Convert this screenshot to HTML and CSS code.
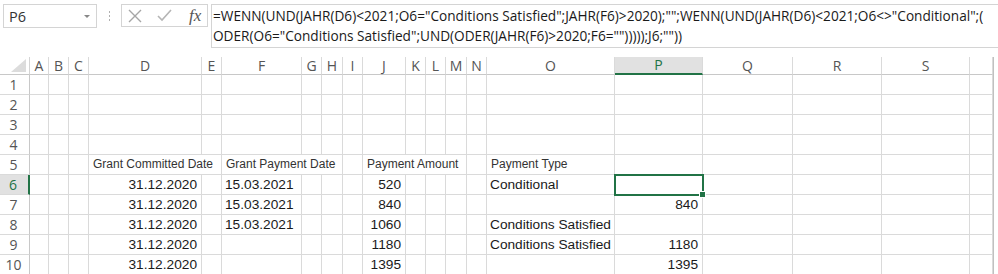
FILE: index.html
```html
<!DOCTYPE html>
<html lang="de">
<head>
  <meta charset="UTF-8" />
  <title>Mappe1 - Excel</title>
  <link rel="stylesheet" href="styles.css">
</head>
<body>
  <!-- Formula bar -->
  <div class="formula-bar">
    <div class="name-box">
      <span>P6</span>
      <span class="drop"></span>
    </div>
    <div class="grip"><i></i><i></i><i></i></div>
    <div class="fx-box">
      <svg width="14" height="14" viewBox="0 0 14 14"><path d="M1 1L13 13M13 1L1 13" stroke="#a6a6a6" stroke-width="1.4" fill="none"/></svg>
      <svg width="15" height="13" viewBox="0 0 15 13"><path d="M1 7L5 11L14 1" stroke="#b5b5b5" stroke-width="1.6" fill="none"/></svg>
      <span class="fx">fx</span>
    </div>
    <div class="formula">=WENN(UND(JAHR(D6)&lt;2021;O6="Conditions Satisfied";JAHR(F6)&gt;2020);"";WENN(UND(JAHR(D6)&lt;2021;O6&lt;&gt;"Conditional";(<br>ODER(O6="Conditions Satisfied";UND(ODER(JAHR(F6)&gt;2020;F6="")))));J6;""))</div>
  </div>

  <!-- Sheet -->
  <div class="sheet">
    <div class="corner"></div>
    <div class="ch">A</div><div class="ch">B</div><div class="ch">C</div><div class="ch">D</div><div class="ch">E</div>
    <div class="ch">F</div><div class="ch">G</div><div class="ch">H</div><div class="ch">I</div><div class="ch">J</div>
    <div class="ch">K</div><div class="ch">L</div><div class="ch">M</div><div class="ch">N</div><div class="ch">O</div>
    <div class="ch active">P</div><div class="ch">Q</div><div class="ch">R</div><div class="ch">S</div><div class="ch"></div>

    <div class="rh">1</div>
    <div class="c"></div><div class="c"></div><div class="c"></div><div class="c"></div><div class="c"></div>
    <div class="c"></div><div class="c"></div><div class="c"></div><div class="c"></div><div class="c"></div>
    <div class="c"></div><div class="c"></div><div class="c"></div><div class="c"></div><div class="c"></div>
    <div class="c"></div><div class="c"></div><div class="c"></div><div class="c"></div><div class="c"></div>

    <div class="rh">2</div>
    <div class="c"></div><div class="c"></div><div class="c"></div><div class="c"></div><div class="c"></div>
    <div class="c"></div><div class="c"></div><div class="c"></div><div class="c"></div><div class="c"></div>
    <div class="c"></div><div class="c"></div><div class="c"></div><div class="c"></div><div class="c"></div>
    <div class="c"></div><div class="c"></div><div class="c"></div><div class="c"></div><div class="c"></div>

    <div class="rh">3</div>
    <div class="c"></div><div class="c"></div><div class="c"></div><div class="c"></div><div class="c"></div>
    <div class="c"></div><div class="c"></div><div class="c"></div><div class="c"></div><div class="c"></div>
    <div class="c"></div><div class="c"></div><div class="c"></div><div class="c"></div><div class="c"></div>
    <div class="c"></div><div class="c"></div><div class="c"></div><div class="c"></div><div class="c"></div>

    <div class="rh">4</div>
    <div class="c"></div><div class="c"></div><div class="c"></div><div class="c"></div><div class="c"></div>
    <div class="c"></div><div class="c"></div><div class="c"></div><div class="c"></div><div class="c"></div>
    <div class="c"></div><div class="c"></div><div class="c"></div><div class="c"></div><div class="c"></div>
    <div class="c"></div><div class="c"></div><div class="c"></div><div class="c"></div><div class="c"></div>

    <div class="rh">5</div>
    <div class="c"></div><div class="c"></div><div class="c"></div>
    <div class="c head span2">Grant Committed Date</div>
    <div class="c head span3">Grant Payment Date</div>
    <div class="c"></div>
    <div class="c head span4">Payment Amount</div>
    <div class="c"></div>
    <div class="c head">Payment Type</div>
    <div class="c"></div><div class="c"></div><div class="c"></div><div class="c"></div><div class="c"></div>

    <div class="rh active">6</div>
    <div class="c"></div><div class="c"></div><div class="c"></div>
    <div class="c num">31.12.2020</div><div class="c"></div>
    <div class="c">15.03.2021</div><div class="c"></div><div class="c"></div><div class="c"></div>
    <div class="c num">520</div><div class="c"></div><div class="c"></div><div class="c"></div><div class="c"></div>
    <div class="c">Conditional</div>
    <div class="c num selected"></div><div class="c"></div><div class="c"></div><div class="c"></div><div class="c"></div>

    <div class="rh">7</div>
    <div class="c"></div><div class="c"></div><div class="c"></div>
    <div class="c num">31.12.2020</div><div class="c"></div>
    <div class="c">15.03.2021</div><div class="c"></div><div class="c"></div><div class="c"></div>
    <div class="c num">840</div><div class="c"></div><div class="c"></div><div class="c"></div><div class="c"></div>
    <div class="c"></div>
    <div class="c num">840</div><div class="c"></div><div class="c"></div><div class="c"></div><div class="c"></div>

    <div class="rh">8</div>
    <div class="c"></div><div class="c"></div><div class="c"></div>
    <div class="c num">31.12.2020</div><div class="c"></div>
    <div class="c">15.03.2021</div><div class="c"></div><div class="c"></div><div class="c"></div>
    <div class="c num">1060</div><div class="c"></div><div class="c"></div><div class="c"></div><div class="c"></div>
    <div class="c">Conditions Satisfied</div>
    <div class="c num"></div><div class="c"></div><div class="c"></div><div class="c"></div><div class="c"></div>

    <div class="rh">9</div>
    <div class="c"></div><div class="c"></div><div class="c"></div>
    <div class="c num">31.12.2020</div><div class="c"></div>
    <div class="c"></div><div class="c"></div><div class="c"></div><div class="c"></div>
    <div class="c num">1180</div><div class="c"></div><div class="c"></div><div class="c"></div><div class="c"></div>
    <div class="c">Conditions Satisfied</div>
    <div class="c num">1180</div><div class="c"></div><div class="c"></div><div class="c"></div><div class="c"></div>

    <div class="rh">10</div>
    <div class="c"></div><div class="c"></div><div class="c"></div>
    <div class="c num">31.12.2020</div><div class="c"></div>
    <div class="c"></div><div class="c"></div><div class="c"></div><div class="c"></div>
    <div class="c num">1395</div><div class="c"></div><div class="c"></div><div class="c"></div><div class="c"></div>
    <div class="c"></div>
    <div class="c num">1395</div><div class="c"></div><div class="c"></div><div class="c"></div><div class="c"></div>
  </div>
</body>
</html>
```

FILE: styles.css
```css
/* Base */
html, body {
  margin: 0; padding: 0;
  background: #fff;
  overflow: hidden;
}
body {
  width: 998px; height: 274px;
  font-family: 'Liberation Sans', Arial, sans-serif;
}

/* Formula bar */
.formula-bar {
  display: flex;
  align-items: flex-start;
  height: 57px;
  padding-top: 4px;
  box-sizing: border-box;
}
.name-box {
  margin-left: 3px;
  width: 94px; height: 24px;
  box-sizing: border-box;
  border: 1px solid #d4d4d4;
  display: flex; align-items: center;
  justify-content: space-between;
  padding: 0 6px 0 5px;
  font-family: 'Open Sans', sans-serif;
  font-size: 14.5px; color: #333;
}
.drop {
  width: 0; height: 0;
  border-left: 3px solid transparent;
  border-right: 3px solid transparent;
  border-top: 3px solid #888;
}
.grip {
  width: 24px; height: 24px;
  display: flex; flex-direction: column;
  align-items: center; justify-content: center;
  gap: 2px;
}
.grip i {
  display: block;
  width: 1px; height: 2px;
  background: #b0b0b0;
}
.fx-box {
  width: 87px; height: 23px;
  box-sizing: border-box;
  border: 1px solid #d4d4d4;
  display: flex; align-items: center;
  gap: 15px;
  padding-left: 6px;
}
.fx {
  font-family: 'Liberation Serif', 'Times New Roman', serif;
  font-style: italic;
  font-size: 17px; color: #555;
  margin-left: 2px;
}
.formula {
  margin-left: 3px;
  flex: 1;
  height: 44px;
  box-sizing: border-box;
  border: 1px solid #d4d4d4;
  border-right: none;
  padding: 1px 0 0 1px;
  font-family: 'Open Sans', sans-serif;
  font-size: 13.65px;
  line-height: 20px;
  color: #1a1a1a;
  white-space: nowrap;
  overflow: hidden;
}

/* Sheet grid */
.sheet {
  display: grid;
  grid-template-columns: 30px 19px 20px 20px 113px 20px 80px 20px 21px 20px 43px 20px 20px 21px 20px 128px 88px 90px 89px 88px 23px;
  grid-template-rows: 18px repeat(10, 20px);
  width: 994px;
  border-right: 1px solid #c0c0c0;
  box-sizing: border-box;
}
.corner {
  border-right: 1px solid #d4d4d4;
  border-bottom: 1px solid #c8c8c8;
  position: relative;
}
.corner::after {
  content: '';
  position: absolute;
  right: 3px; bottom: 2px;
  border-left: 15px solid transparent;
  border-bottom: 13px solid #dcdcdc;
}
.ch {
  border-right: 1px solid #dadada;
  border-bottom: 1px solid #c8c8c8;
  display: flex; align-items: center; justify-content: center;
  font-family: 'Open Sans', sans-serif;
  font-size: 14px; color: #555;
  line-height: 1;
}
.ch.active {
  background: #e1e1e1;
  border-bottom: 2px solid #217346;
  color: #217346;
}
.rh {
  border-right: 1px solid #c8c8c8;
  border-bottom: 1px solid #dadada;
  display: flex; align-items: center; justify-content: center;
  font-family: 'Open Sans', sans-serif;
  font-size: 14px; color: #555;
  padding-right: 2px;
}
.rh.active {
  background: #e1e1e1;
  border-right: 2px solid #217346;
  color: #217346;
}

/* Cells */
.c {
  border-right: 1px solid #dadada;
  border-bottom: 1px solid #dadada;
  display: flex; align-items: flex-end;
  padding: 0 3px 1px 3px;
  font-size: 13.7px; color: #1a1a1a;
  white-space: nowrap;
  line-height: 17px;
  min-width: 0;
}
.c.num { justify-content: flex-end; padding-right: 4px; }
.c.head {
  font-size: 12px; color: #333;
  padding-left: 4px;
}
.span2 { grid-column: span 2; }
.span3 { grid-column: span 3; }
.span4 { grid-column: span 4; }

/* Active cell */
.c.selected {
  position: relative;
  outline: 2px solid #217346;
  outline-offset: -1px;
  z-index: 1;
}
.c.selected::after {
  content: '';
  position: absolute;
  right: -4px; bottom: -4px;
  width: 5px; height: 5px;
  background: #217346;
  border: 1px solid #fff;
}
```
